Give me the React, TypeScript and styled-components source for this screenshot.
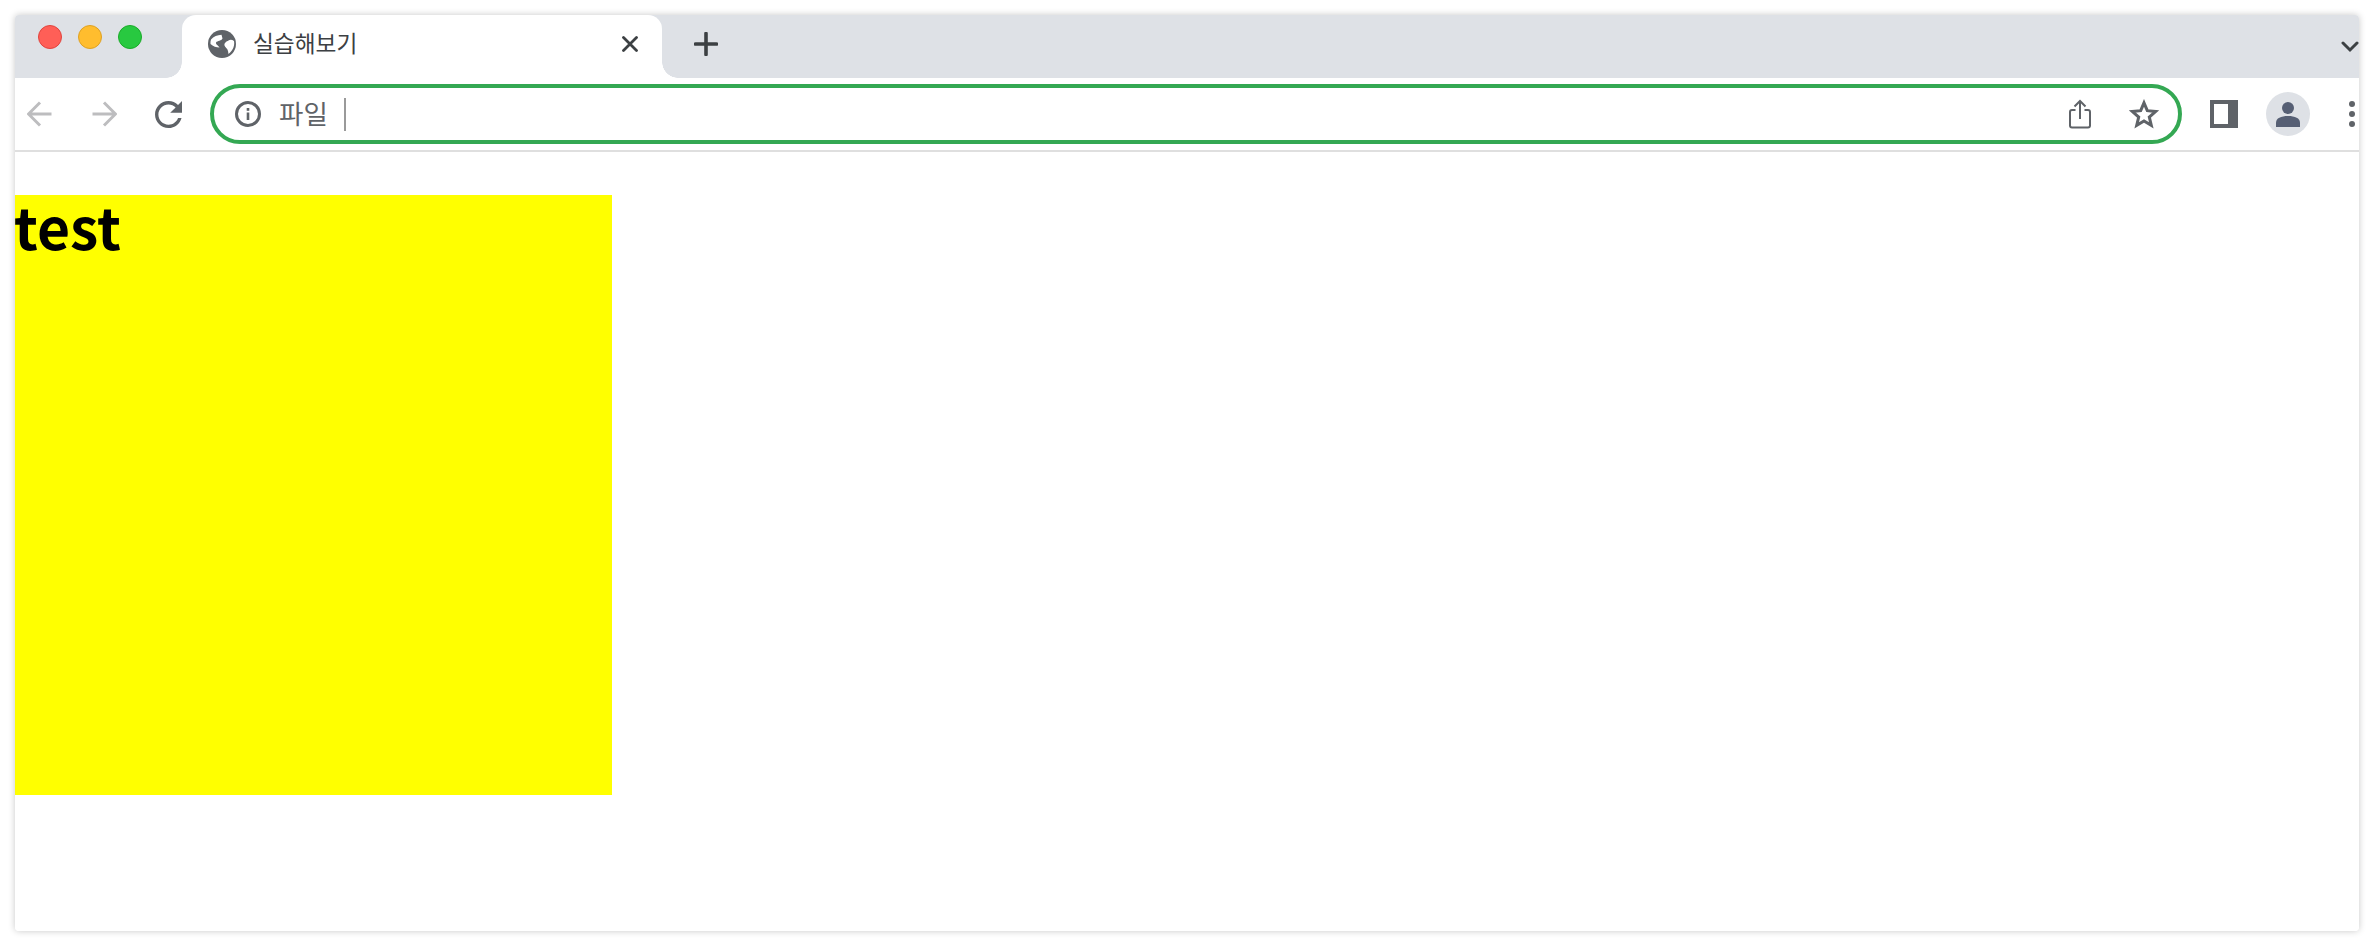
import React from 'react'
import styled, { createGlobalStyle } from 'styled-components'

const CJK_STACK = `'Noto Sans CJK KR', 'Noto Sans', sans-serif`

const GlobalStyle = createGlobalStyle`
  html, body {
    margin: 0;
    padding: 0;
    background: #ffffff;
  }
`

const Page = styled.div`
  width: 2374px;
  height: 946px;
  padding: 15px;
  box-sizing: border-box;
  overflow: hidden;
  background: #ffffff;
`

const BrowserWindow = styled.div`
  height: 916px;
  display: flex;
  flex-direction: column;
  background: #ffffff;
  border-radius: 4px;
  overflow: hidden;
  box-shadow: 0 0 7px rgba(0, 0, 0, 0.22);
`

const TabStrip = styled.div`
  height: 63px;
  flex: none;
  display: flex;
  background: #dee1e6;
`

const TrafficLights = styled.div`
  width: 167px;
  flex: none;
  display: flex;
  gap: 16px;
  padding: 10px 0 0 23px;
  box-sizing: border-box;
`

const Light = styled.span<{ $fill: string; $edge: string }>`
  width: 24px;
  height: 24px;
  border-radius: 50%;
  box-sizing: border-box;
  background: ${({ $fill }) => $fill};
  border: 1px solid ${({ $edge }) => $edge};
`

const Tab = styled.div`
  position: relative;
  width: 480px;
  flex: none;
  display: flex;
  align-items: center;
  padding: 0 24px 5px 26px;
  box-sizing: border-box;
  background: #ffffff;
  border-radius: 14px 14px 0 0;

  &::before,
  &::after {
    content: '';
    position: absolute;
    bottom: 0;
    width: 16px;
    height: 16px;
  }

  &::before {
    left: -16px;
    background: radial-gradient(circle at 0 0, #dee1e6 15.5px, #ffffff 16px);
  }

  &::after {
    right: -16px;
    background: radial-gradient(circle at 100% 0, #dee1e6 15.5px, #ffffff 16px);
  }
`

const TabTitle = styled.span`
  flex: 1;
  margin-left: 17px;
  padding-bottom: 2px;
  font-family: ${CJK_STACK};
  font-size: 22.7px;
  line-height: 28px;
  color: #3c4043;
`

const NewTab = styled.div`
  margin-left: 32px;
  padding-bottom: 5px;
  display: flex;
  align-items: center;
  flex: 1;
`

const ChevronSlot = styled.div`
  display: flex;
  align-items: center;
`

const Toolbar = styled.div`
  height: 74px;
  flex: none;
  display: flex;
  align-items: center;
  padding-left: 12px;
  box-sizing: border-box;
  background: #ffffff;
  border-bottom: 2px solid #dfdfdf;
`

const NavGroup = styled.div`
  display: flex;
  align-items: center;
  gap: 38px;
  margin-right: 28px;
`

const Omnibox = styled.div`
  width: 1972px;
  height: 60px;
  flex: none;
  display: flex;
  align-items: center;
  padding: 0 19px 0 21px;
  box-sizing: border-box;
  border: 4px solid #34a853;
  border-radius: 30px;
`

const SiteLabel = styled.span`
  margin-left: 18px;
  padding-bottom: 2px;
  font-family: ${CJK_STACK};
  font-size: 26.5px;
  line-height: 32px;
  color: #5f6368;
`

const Caret = styled.span`
  width: 2px;
  height: 33px;
  margin-left: 16px;
  background: #9a9a9a;
`

const OmniActions = styled.div`
  margin-left: auto;
  display: flex;
  align-items: center;
  gap: 38px;
`

const RightGroup = styled.div`
  display: flex;
  align-items: center;
  margin-left: 28px;
`

const Avatar = styled.div`
  width: 44px;
  height: 44px;
  margin-left: 28px;
  border-radius: 50%;
  background: #dee1e6;
  display: flex;
  align-items: center;
  justify-content: center;
`

const MenuDots = styled.div`
  margin-left: 39px;
  display: flex;
  flex-direction: column;
  gap: 4px;
`

const Dot = styled.span`
  width: 6px;
  height: 6px;
  border-radius: 50%;
  background: #5f6368;
`

const Content = styled.div`
  flex: 1;
  padding-top: 43px;
  background: #ffffff;
`

const YellowBox = styled.div`
  width: 597px;
  height: 600px;
  background: #ffff00;
`

const Heading = styled.h1`
  margin: 0;
  text-indent: -1px;
  font-family: ${CJK_STACK};
  font-size: 57px;
  line-height: 60px;
  font-weight: 700;
  color: #000000;
`

const GlobeIcon = () => (
  <svg width="28" height="28" viewBox="0 0 28 28">
    <circle cx="14" cy="14" r="14" fill="#5f6368" />
    <path
      d="M3 9.5C5.5 6.5 9.5 5 13.5 4.8l1 3.7c-1 2.5-5 2-6.5 4-.5 2 2.500 3 3.500 5-3 0-6.500-1-9-3.500-.2-1.500 0-3 .5-4.500z"
      fill="#ffffff"
    />
    <path
      d="M26 11c-2-1.500-4-1.500-5.500-.5-2 1-4.500 2.500-4 5 .5 2 3 3 3.500 5.500l.5 3c2.500-2 5-5 5.500-8.500.3-1.500.3-3 0-4.500z"
      fill="#ffffff"
    />
  </svg>
)

const CloseIcon = () => (
  <svg width="16" height="16" viewBox="0 0 16 16">
    <path d="M1.5 1.5l13 13M14.5 1.5l-13 13" stroke="#3c4043" strokeWidth="2.8" strokeLinecap="round" />
  </svg>
)

const PlusIcon = () => (
  <svg width="24" height="24" viewBox="0 0 24 24">
    <path d="M12 1.5v21M1.5 12h21" stroke="#3c4043" strokeWidth="3.6" strokeLinecap="round" />
  </svg>
)

const ChevronIcon = () => (
  <svg width="18" height="12" viewBox="0 0 18 12">
    <path d="M2 2l7 7 7-7" fill="none" stroke="#3c4043" strokeWidth="3" strokeLinecap="round" />
  </svg>
)

const ArrowIcon = ({ flip }: { flip?: boolean }) => (
  <svg width="26" height="26" viewBox="0 0 26 26" style={flip ? { transform: 'scaleX(-1)' } : undefined}>
    <path d="M1.5 13h23M13 1.5L1.5 13 13 24.5" fill="none" stroke="#bdbdbf" strokeWidth="3" />
  </svg>
)

const ReloadIcon = () => (
  <svg width="27" height="27" viewBox="4 4 16 16">
    <path
      d="M17.65 6.35C16.2 4.9 14.21 4 12 4c-4.42 0-7.99 3.58-7.99 8s3.57 8 7.99 8c3.73 0 6.84-2.55 7.73-6h-2.08c-.82 2.33-3.04 4-5.65 4-3.31 0-6-2.69-6-6s2.69-6 6-6c1.66 0 3.14.69 4.22 1.78L13 11h7V4l-2.35 2.35z"
      fill="#5f6368"
    />
  </svg>
)

const InfoIcon = () => (
  <svg width="26" height="26" viewBox="0 0 26 26">
    <circle cx="13" cy="13" r="11.5" fill="none" stroke="#5f6368" strokeWidth="3" />
    <rect x="11.7" y="11.5" width="2.6" height="7.5" fill="#5f6368" />
    <rect x="11.7" y="7" width="2.6" height="2.8" fill="#5f6368" />
  </svg>
)

const ShareIcon = () => (
  <svg width="22" height="30" viewBox="0 0 22 30">
    <path
      d="M6.5 11H3a2 2 0 0 0-2 2v13.5a2 2 0 0 0 2 2h16a2 2 0 0 0 2-2V13a2 2 0 0 0-2-2h-3.5"
      fill="none"
      stroke="#5f6368"
      strokeWidth="2"
    />
    <path d="M11 20V2M5.5 7.5L11 2l5.5 5.5" fill="none" stroke="#5f6368" strokeWidth="2" />
  </svg>
)

const StarIcon = () => (
  <svg width="30" height="30" viewBox="0 0 30 30">
    <path
      d="M15 3.8l3.3 7.9 8.5.7-6.5 5.6 2 8.300L15 21.900l-7.300 4.400 2-8.300-6.500-5.600 8.500-.7z"
      fill="none"
      stroke="#5f6368"
      strokeWidth="3"
    />
  </svg>
)

const SidePanelIcon = () => (
  <svg width="28" height="28" viewBox="0 0 28 28">
    <rect width="28" height="28" fill="#5f6368" />
    <rect x="4" y="4" width="14" height="20" fill="#ffffff" />
  </svg>
)

const PersonIcon = () => (
  <svg width="24" height="26" viewBox="0 0 24 26">
    <circle cx="12" cy="7" r="6" fill="#565f74" />
    <path d="M0 26v-4c0-5 5-7 12-7s12 2 12 7v4z" fill="#565f74" />
  </svg>
)

export default function App() {
  return (
    <Page>
      <GlobalStyle />
      <BrowserWindow>
        <TabStrip>
          <TrafficLights>
            <Light $fill="#ff5f57" $edge="#e0443e" />
            <Light $fill="#ffbd2e" $edge="#dea123" />
            <Light $fill="#28c940" $edge="#1aab29" />
          </TrafficLights>
          <Tab>
            <GlobeIcon />
            <TabTitle>실습해보기</TabTitle>
            <CloseIcon />
          </Tab>
          <NewTab>
            <PlusIcon />
          </NewTab>
          <ChevronSlot>
            <ChevronIcon />
          </ChevronSlot>
        </TabStrip>
        <Toolbar>
          <NavGroup>
            <ArrowIcon />
            <ArrowIcon flip />
            <ReloadIcon />
          </NavGroup>
          <Omnibox>
            <InfoIcon />
            <SiteLabel>파일</SiteLabel>
            <Caret />
            <OmniActions>
              <ShareIcon />
              <StarIcon />
            </OmniActions>
          </Omnibox>
          <RightGroup>
            <SidePanelIcon />
            <Avatar>
              <PersonIcon />
            </Avatar>
            <MenuDots>
              <Dot />
              <Dot />
              <Dot />
            </MenuDots>
          </RightGroup>
        </Toolbar>
        <Content>
          <YellowBox>
            <Heading>test</Heading>
          </YellowBox>
        </Content>
      </BrowserWindow>
    </Page>
  )
}
